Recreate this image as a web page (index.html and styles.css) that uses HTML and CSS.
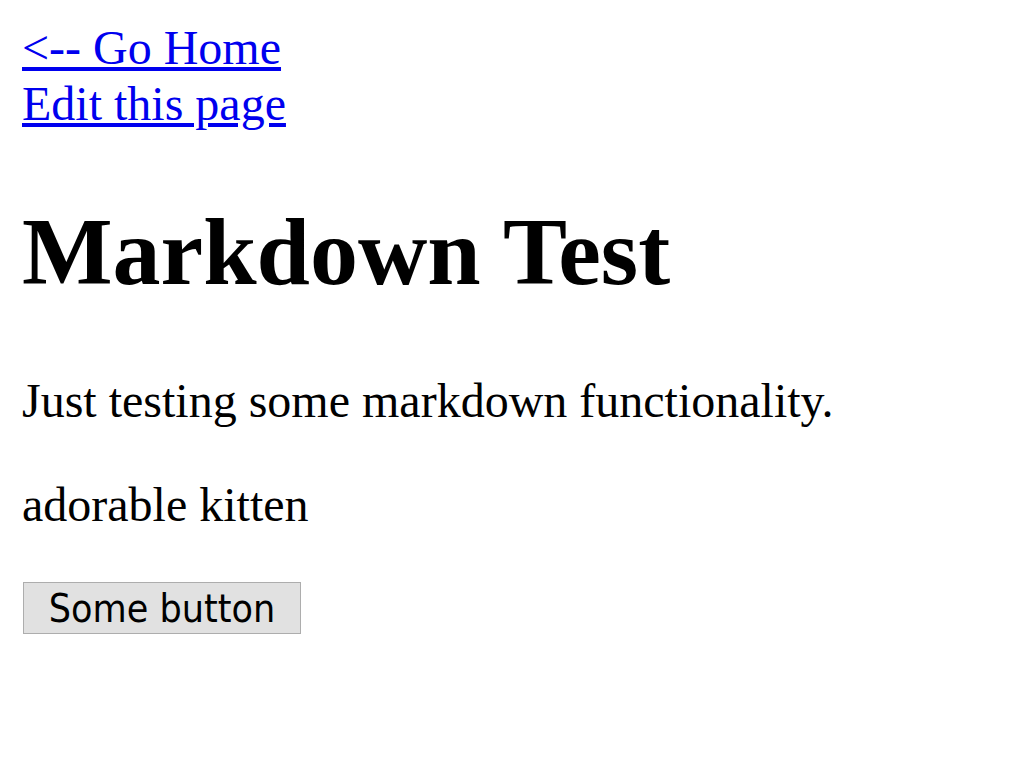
FILE: index.html
```html
<!DOCTYPE html>
<html>
<head>
<meta charset="utf-8">
<title>Markdown Test</title>
<link rel="stylesheet" href="styles.css">
</head>
<body class="page">
<nav class="nav">
<a class="nav-link" href="#">&lt;-- Go Home</a>
<a class="nav-link" href="#">Edit this page</a>
</nav>
<h1 class="title">Markdown Test</h1>
<p class="para">Just testing some markdown functionality.</p>
<p class="para">adorable kitten</p>
<div class="actions">
<button class="btn" type="button">Some button</button>
</div>
</body>
</html>
```
FILE: styles.css
```css
html, body {
  background: #ffffff;
}
.page {
  margin: 20px 22px;
  font-family: "Liberation Serif", "Times New Roman", serif;
  font-size: 48px;
  color: #000000;
}
.nav {
  display: flex;
  flex-direction: column;
  align-items: flex-start;
}
.nav-link {
  color: #0000ee;
  text-decoration: underline;
  line-height: 56px;
}
.title {
  font-size: 96px;
  font-weight: bold;
  margin: 64px 0 66px;
}
.para {
  margin: 48px 0;
}
.para + .para {
  margin-top: 49px;
}
.actions {
  margin-top: 50px;
}
.btn {
  display: block;
  width: 278px;
  height: 52px;
  margin: 0 0 0 1px;
  padding: 0;
  background: #e1e1e1;
  border: 1px solid #adadad;
  border-radius: 0;
  font-family: "DejaVu Sans", sans-serif;
  font-stretch: condensed;
  font-size: 39px;
  color: #000000;
  text-align: center;
}
```
